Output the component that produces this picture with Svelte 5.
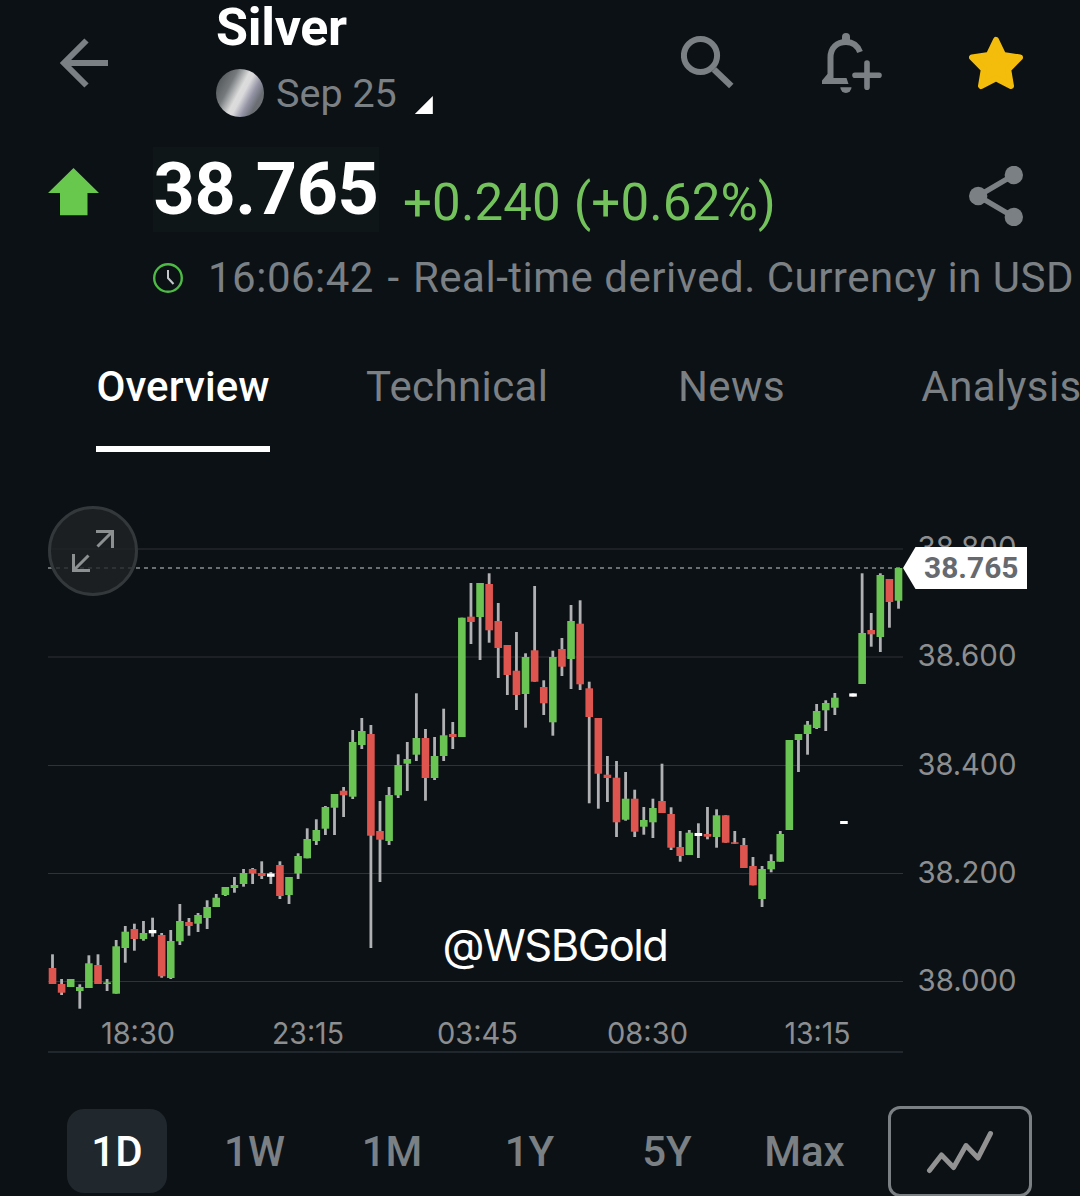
<script lang="ts">
  type Tone = 'up' | 'down' | 'flat';
  type Candle = [Tone, number, number, number, number];

  const tabs = ['Overview', 'Technical', 'News', 'Analysis'];
  const ranges = ['1D', '1W', '1M', '1Y', '5Y', 'Max'];

  let activeTab = $state('Overview');
  let activeRange = $state('1D');

  const priceTicks = [
    { label: '38.800', y: 549 },
    { label: '38.600', y: 657 },
    { label: '38.400', y: 765.5 },
    { label: '38.200', y: 873.5 },
    { label: '38.000', y: 981.5 },
  ];

  const timeTicks = [
    { label: '18:30', x: 101, width: 74 },
    { label: '23:15', x: 272, width: 72 },
    { label: '03:45', x: 437, width: 81 },
    { label: '08:30', x: 607, width: 81 },
    { label: '13:15', x: 784.5, width: 66 },
  ];

  // tone, wick top, body top, body bottom, wick bottom
  const candles: Candle[] = [
    ['down', 954.3, 968, 984, 984],
    ['down', 979, 984, 992.7, 995],
    ['up', 979, 979, 987, 987],
    ['up', 984.3, 987, 991, 1008.7],
    ['up', 955.3, 963.3, 988, 988],
    ['down', 954.3, 965, 984, 984],
    ['up', 979, 982.4, 984, 991],
    ['up', 940, 946.3, 993.7, 993.7],
    ['up', 926, 931.7, 948, 962.7],
    ['down', 923.7, 929, 939, 950.7],
    ['up', 921, 933, 939, 940.7],
    ['flat', 917.7, 930, 933.3, 936.7],
    ['down', 933, 935, 976.3, 977.7],
    ['up', 930, 941, 978, 979],
    ['up', 904, 921, 941.3, 945],
    ['down', 918, 922, 926, 935.7],
    ['up', 913, 915, 923.7, 932],
    ['up', 900.3, 907, 918, 929],
    ['up', 894, 897.7, 907, 907],
    ['up', 887, 887, 895, 896],
    ['up', 877, 885, 888, 892.7],
    ['up', 869, 873, 884, 886.7],
    ['down', 868, 869, 873.5, 884],
    ['down', 861.3, 873, 876, 879],
    ['flat', 872, 873.5, 876.8, 884],
    ['down', 861.3, 865, 896, 899],
    ['up', 877, 877, 895, 904],
    ['up', 853.3, 856, 873.5, 879],
    ['up', 828.3, 839, 858.3, 858.3],
    ['up', 819.3, 830, 841, 845],
    ['up', 806, 807, 828.7, 835],
    ['up', 794, 794, 807.7, 835],
    ['down', 787, 790.7, 795.3, 817],
    ['up', 730, 742, 796.7, 799],
    ['up', 718, 731, 745, 749],
    ['down', 725, 734, 835.7, 948],
    ['down', 801, 831, 839.7, 882],
    ['up', 787, 795, 841, 845],
    ['up', 754.3, 765, 795.3, 798],
    ['up', 742, 759, 763.7, 791],
    ['up', 693.3, 738, 754.7, 761],
    ['down', 729, 738, 778, 800.7],
    ['up', 737, 756, 778, 780],
    ['up', 708.7, 735.3, 756, 761],
    ['down', 722, 734, 737, 749],
    ['up', 617.7, 617.7, 737, 737],
    ['down', 583, 616.7, 622, 644],
    ['up', 583, 583, 617, 660],
    ['down', 573.3, 584, 630.3, 642.7],
    ['down', 603, 621, 648, 678],
    ['down', 645, 645, 675, 695],
    ['down', 632, 670.7, 695, 710],
    ['up', 653.3, 657, 694, 727.7],
    ['down', 586, 650.3, 681.7, 681.7],
    ['down', 680.3, 687, 703.3, 715],
    ['up', 650.7, 657, 722.3, 735.7],
    ['down', 638, 649, 666.7, 676],
    ['up', 605, 621, 659, 689],
    ['down', 600.3, 623.7, 684.3, 690],
    ['down', 681.7, 688.3, 717, 803.3],
    ['down', 718, 718, 773.7, 808.7],
    ['down', 756, 774.7, 778, 802],
    ['down', 761, 777.7, 822.3, 837],
    ['up', 772, 798.7, 819.7, 820.7],
    ['down', 789.7, 798.7, 831.7, 837],
    ['up', 807, 820, 826.7, 834.7],
    ['up', 798.7, 808, 822.3, 838],
    ['down', 763.7, 801, 813, 813],
    ['down', 807.3, 814, 847.7, 850],
    ['down', 831, 847, 856, 861.7],
    ['up', 830, 832.7, 855, 855],
    ['flat', 823.3, 833, 836, 858],
    ['down', 807, 834, 836.7, 839.3],
    ['up', 809.3, 815.3, 837, 847.7],
    ['down', 815.3, 815.3, 842.7, 842.7],
    ['down', 831, 842.3, 843.8, 843.8],
    ['down', 838, 845, 868, 868],
    ['down', 857, 866, 885.3, 885.3],
    ['up', 866, 869, 899, 907],
    ['up', 854.3, 861, 869.3, 872.3],
    ['up', 831, 834, 861.7, 861.7],
    ['up', 740, 740, 830, 830],
    ['up', 734, 734, 740, 772],
    ['up', 721, 724.7, 734, 754.7],
    ['up', 704, 711, 728, 729],
    ['up', 700.3, 703, 710.3, 731],
    ['up', 693, 697.7, 707.7, 715],
    ['flat', 821, 821, 824, 824],
    ['flat', 693.4, 693.4, 696.6, 696.6],
    ['up', 573.3, 633, 684, 684],
    ['down', 613, 630, 634.3, 646.7],
    ['up', 573.3, 575, 637, 652],
    ['down', 579, 579, 602, 627.7],
    ['up', 568, 568, 600.7, 608.7],
  ];

  const firstX = 52.5;
  const step = 9.097;

  function candleX(i: number): number {
    return firstX + i * step;
  }
</script>

<main class="screen">
  <header class="top-bar">
    <button class="icon-btn back" aria-label="Back">
      <svg width="48" height="50" viewBox="60 38 48 50" fill="none">
        <path d="M86.5 40.5L64 63L86.5 85.5M64 63H108" stroke="currentColor" stroke-width="6"/>
      </svg>
    </button>
    <div class="title-block">
      <h1>Silver</h1>
      <div class="contract">
        <span class="coin"></span>
        <span class="month">Sep 25</span>
        <span class="corner"></span>
      </div>
    </div>
    <div class="actions">
      <button class="icon-btn" aria-label="Search">
        <svg width="54" height="60" viewBox="681 33 54 60" fill="none" stroke="currentColor" stroke-width="6">
          <circle cx="700.5" cy="55.5" r="16.6"/>
          <path d="M714 69.5L731.3 86" stroke-width="6.4"/>
        </svg>
      </button>
      <button class="icon-btn" aria-label="Add alert">
        <svg width="60" height="60" viewBox="822 33 60 60" fill="none">
          <path d="M842 42V37a4 4 0 0 1 8 0V42z" fill="currentColor"/>
          <path d="M830.5 80V57.5C830.5 48 837 42 846 42C852.5 42 857.5 45.5 860 52" stroke="currentColor" stroke-width="6"/>
          <path d="M827.5 74L822 80.5V84H848.5L846.5 78H833V74z" fill="currentColor"/>
          <path d="M840.3 87.2H851.5a5.6 5.8 0 0 1-11.2 0z" fill="currentColor"/>
          <path d="M867 63V87.2M855 75.2H879" stroke="currentColor" stroke-width="5.6" stroke-linecap="round"/>
        </svg>
      </button>
      <button class="icon-btn star" aria-label="Watchlist">
        <svg width="54" height="60" viewBox="969 33 54 60">
          <path d="M996 40L1003.2 55L1020 57.5L1008.2 69.5L1011 86L996 78.3L981 86L983.8 69.5L972 57.5L988.8 55Z" fill="currentColor" stroke="currentColor" stroke-width="6" stroke-linejoin="round"/>
        </svg>
      </button>
    </div>
  </header>

  <section class="quote">
    <svg class="trend" width="52" height="48" viewBox="48 168 52 48">
      <path d="M73.5 168L99 193H87.5V215.3H60V193H48z" fill="currentColor"/>
    </svg>
    <span class="price">38.765</span>
    <span class="change">+0.240 (+0.62%)</span>
    <button class="icon-btn share" aria-label="Share">
      <svg width="54" height="60" viewBox="969 166 54 60">
        <path d="M1013.8 175L978.2 196L1013.8 217" fill="none" stroke="currentColor" stroke-width="5.5"/>
        <circle cx="1013.8" cy="175" r="9.2" fill="currentColor"/>
        <circle cx="978.2" cy="196" r="9.2" fill="currentColor"/>
        <circle cx="1013.8" cy="217" r="9.2" fill="currentColor"/>
      </svg>
    </button>
  </section>

  <div class="status">
    <svg width="30" height="30" viewBox="0 0 30 30" fill="none">
      <circle cx="15" cy="15" r="13.8" stroke="#4dbb45" stroke-width="2.4"/>
      <path d="M15 7V15L20.5 21" stroke="#c4c8ca" stroke-width="2"/>
    </svg>
    <span>16:06:42 <span class="dash">-</span> Real-time derived. Currency in USD</span>
  </div>

  <nav class="tabs">
    {#each tabs as tab}
      <button class="tab" class:active={tab === activeTab} onclick={() => (activeTab = tab)}>{tab}</button>
    {/each}
  </nav>

  <section class="chart">
    <svg width="1080" height="590" viewBox="0 490 1080 590">
      {#each priceTicks as tick}
        <line class="grid" x1="48" x2="903" y1={tick.y} y2={tick.y}/>
        <text class="axis" x="917.5" y={tick.y + 9} textLength="99" lengthAdjust="spacingAndGlyphs">{tick.label}</text>
      {/each}

      {#each timeTicks as tick}
        <text class="axis" x={tick.x} y="1044" textLength={tick.width} lengthAdjust="spacingAndGlyphs">{tick.label}</text>
      {/each}
      <line class="base" x1="48" x2="903" y1="1052" y2="1052"/>

      <line class="last" x1="48" x2="903" y1="568" y2="568"/>

      {#each candles as [tone, high, top, bottom, low], i}
        <rect class="wick" x={candleX(i) - 1.4} y={high} width="2.8" height={low - high}/>
        <rect class={tone} x={candleX(i) - 3.8} y={top} width="7.6" height={bottom - top}/>
      {/each}

      <g class="expand">
        <circle cx="93" cy="551" r="43.5"/>
        <path d="M96 531.5H112.5V548M112 532L97.5 546.5"/>
        <path d="M73.5 554V570.5H90M74 570L88.5 555.5"/>
      </g>

      <path d="M903 568L915.5 547H1027V589H915.5z" fill="#fff"/>
      <text class="flag" x="924" y="577.7" textLength="94.5" lengthAdjust="spacingAndGlyphs">38.765</text>

      <text class="handle" x="442.5" y="961" textLength="225" lengthAdjust="spacingAndGlyphs">@WSBGold</text>
    </svg>
  </section>

  <footer class="ranges">
    {#each ranges as range}
      <button class="range" class:active={range === activeRange} onclick={() => (activeRange = range)}>{range}</button>
    {/each}
    <button class="chart-type" aria-label="Chart type">
      <svg width="68" height="46" viewBox="926 1128 68 46" fill="none">
        <path d="M929.5 1169.5L941.5 1154L953.6 1166.5L966 1144.5L978 1157L990.5 1132.5" stroke="#929292" stroke-width="5" stroke-linecap="round" stroke-linejoin="round"/>
      </svg>
    </button>
  </footer>
</main>

<style>
  :global(body) {
    background: #0c1115;
  }

  .screen {
    width: 1080px;
    height: 1196px;
    overflow: hidden;
    background: #0c1115;
    color: #7b8085;
    font-family: Roboto, sans-serif;
    display: flex;
    flex-direction: column;
  }

  button {
    margin: 0;
    padding: 0;
    border: none;
    background: transparent;
    color: inherit;
    font: inherit;
    letter-spacing: inherit;
    cursor: pointer;
  }

  svg {
    display: block;
    flex-shrink: 0;
  }

  .top-bar {
    display: flex;
    align-items: flex-start;
    height: 147px;
    padding: 0 57px 0 60px;
    flex-shrink: 0;
  }

  .back {
    margin-top: 38px;
  }

  .title-block {
    margin-left: 108px;
  }

  h1 {
    margin: 0;
    font-size: 52px;
    line-height: 56px;
    font-weight: 700;
    letter-spacing: -0.3px;
    color: #fff;
  }

  .contract {
    display: flex;
    align-items: center;
    height: 48px;
    margin-top: 13px;
  }

  .coin {
    width: 48px;
    height: 48px;
    border-radius: 50%;
    background: linear-gradient(118deg, #4e5356 8%, #75797c 30%, #dcdcdc 48%, #dadadc 55%, #9494a6 68%, #6a6e73 80%, #707477 100%);
  }

  .month {
    margin-left: 12px;
    font-size: 39.5px;
  }

  .corner {
    align-self: flex-end;
    width: 18px;
    height: 18px;
    margin: 0 0 3px 18px;
    background: #fff;
    clip-path: polygon(100% 0, 100% 100%, 0 100%);
  }

  .actions {
    display: flex;
    gap: 87px;
    margin: 33px 0 0 auto;
  }

  .star {
    color: #f4bc0b;
  }

  .quote {
    display: flex;
    align-items: flex-start;
    height: 85px;
    padding: 0 57px 0 48px;
    flex-shrink: 0;
  }

  .trend {
    margin-top: 21px;
    color: #68c84d;
  }

  .price {
    width: 226px;
    margin-left: 53px;
    background: #0e1618;
    color: #fff;
    font-size: 72px;
    line-height: 85px;
    font-weight: 700;
    letter-spacing: -0.4px;
    text-align: center;
  }

  .change {
    margin-left: 24px;
    color: #73c25c;
    font-size: 51px;
    line-height: 111px;
    letter-spacing: 0.15px;
    white-space: nowrap;
  }

  .share {
    margin: 19px 0 0 auto;
  }

  .status {
    display: flex;
    align-items: center;
    gap: 25px;
    height: 91px;
    padding-left: 153px;
    font-size: 42px;
    letter-spacing: 0.5px;
    white-space: nowrap;
    flex-shrink: 0;
  }

  .dash {
    margin: 0 2.5px;
  }

  .tabs {
    display: flex;
    gap: 96px;
    height: 128px;
    margin: 1px 0 0 96px;
    align-items: flex-start;
    flex-shrink: 0;
  }

  .tab {
    min-width: 174px;
    height: 128px;
    padding-top: 3px;
    border-bottom: 6px solid transparent;
    font-size: 42px;
    font-weight: 400;
    letter-spacing: 0.4px;
    flex-shrink: 0;
  }

  .tab.active {
    border-bottom-color: #fff;
    color: #fff;
    font-weight: 500;
    letter-spacing: 0.1px;
  }

  .chart {
    height: 590px;
    margin-top: 38px;
    flex-shrink: 0;
  }

  .grid {
    stroke: #2e3337;
    stroke-width: 1.2;
  }

  .base {
    stroke: #20272d;
    stroke-width: 2;
  }

  .last {
    stroke: #8b8f91;
    stroke-width: 1.6;
    stroke-dasharray: 4 4;
  }

  .axis {
    fill: #8c8e90;
    font-family: Inter, sans-serif;
    font-size: 30px;
    font-weight: 400;
  }

  .wick {
    fill: #b0b1b2;
  }

  .up {
    fill: #6ac453;
  }

  .down {
    fill: #de544f;
  }

  .flat {
    fill: #fff;
  }

  .expand circle {
    fill: rgba(31, 35, 38, 0.8);
    stroke: #33383b;
    stroke-width: 3;
  }

  .expand path {
    fill: none;
    stroke: #8d9091;
    stroke-width: 3;
  }

  .flag {
    fill: #666a6e;
    font-size: 30px;
    font-weight: 700;
  }

  .handle {
    fill: #fff;
    font-family: Inter, sans-serif;
    font-size: 44px;
    font-weight: 400;
    letter-spacing: -1.5px;
  }

  .ranges {
    display: flex;
    align-items: flex-start;
    gap: 37.5px;
    height: 90px;
    margin-top: 26px;
    padding-left: 67px;
    flex-shrink: 0;
  }

  .range {
    width: 100px;
    height: 84px;
    margin-top: 3px;
    border-radius: 17px;
    font-size: 42px;
    font-weight: 500;
    flex-shrink: 0;
  }

  .range.active {
    background: #20272d;
    color: #fff;
  }

  .chart-type {
    display: flex;
    align-items: center;
    justify-content: center;
    box-sizing: border-box;
    width: 144px;
    height: 91px;
    margin-left: -4px;
    border: 3px solid #7b8085;
    border-radius: 12px;
  }
</style>
